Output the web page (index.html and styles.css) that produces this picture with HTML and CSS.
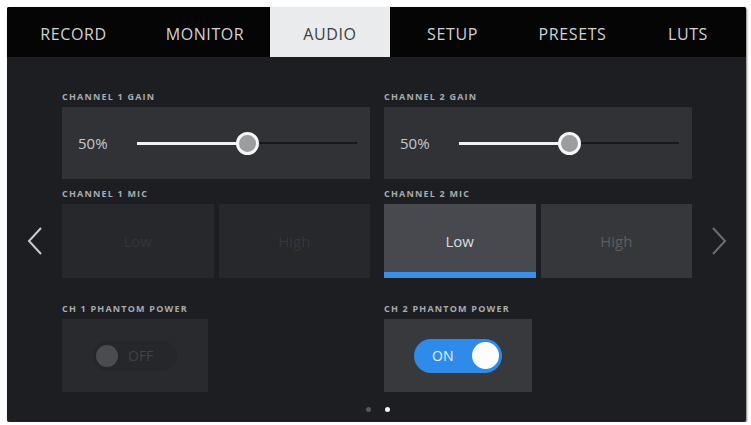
FILE: index.html
```html
<!DOCTYPE html>
<html lang="en">
<head>
    <meta charset="UTF-8">
    <title>audio-menu</title>
    <link rel="stylesheet" href="styles.css">
</head>
<body>
<div class="screen">
    <ul class="tab-bar">
        <li class="tab tab-record">RECORD</li>
        <li class="tab tab-monitor">MONITOR</li>
        <li class="tab tab-audio active-tab">AUDIO</li>
        <li class="tab tab-setup">SETUP</li>
        <li class="tab tab-presets">PRESETS</li>
        <li class="tab tab-luts">LUTS</li>
    </ul>

    <div class="menu-body">
        <!--gain-->
        <div class="menu-row">
            <div class="side"></div>
            <div class="columns">
                <div class="setting">
                    <div class="setting-label">CHANNEL 1 GAIN</div>
                    <div class="gain-box">
                        <span class="gain-value">50%</span>
                        <div class="slider">
                            <div class="slider-fill" style="width: 50%;"></div>
                            <div class="slider-thumb" style="left: 50%;"></div>
                        </div>
                    </div>
                </div>
                <div class="setting">
                    <div class="setting-label">CHANNEL 2 GAIN</div>
                    <div class="gain-box">
                        <span class="gain-value">50%</span>
                        <div class="slider">
                            <div class="slider-fill" style="width: 50%;"></div>
                            <div class="slider-thumb" style="left: 50%;"></div>
                        </div>
                    </div>
                </div>
            </div>
            <div class="side"></div>
        </div>

        <!--mic level-->
        <div class="menu-row mic-row">
            <div class="side">
                <svg class="nav-arrow" width="16" height="28" viewBox="0 0 16 28">
                    <path d="M14 1 L2 14 L14 27" fill="none" stroke="#c9cacc" stroke-width="2"/>
                </svg>
            </div>
            <div class="columns">
                <div class="setting">
                    <div class="setting-label">CHANNEL 1 MIC</div>
                    <div class="mic-buttons disabled">
                        <div class="mic-btn">Low</div>
                        <div class="mic-btn">High</div>
                    </div>
                </div>
                <div class="setting">
                    <div class="setting-label">CHANNEL 2 MIC</div>
                    <div class="mic-buttons">
                        <div class="mic-btn active-mic-btn">Low</div>
                        <div class="mic-btn">High</div>
                    </div>
                </div>
            </div>
            <div class="side">
                <svg class="nav-arrow" width="16" height="28" viewBox="0 0 16 28">
                    <path d="M2 1 L14 14 L2 27" fill="none" stroke="#6b6d70" stroke-width="2"/>
                </svg>
            </div>
        </div>

        <!--phantom power-->
        <div class="menu-row phantom-row">
            <div class="side"></div>
            <div class="columns">
                <div class="setting">
                    <div class="setting-label">CH 1 PHANTOM POWER</div>
                    <div class="phantom-box disabled">
                        <div class="toggle toggle-off">
                            <span class="toggle-knob"></span>
                            <span class="toggle-text">OFF</span>
                        </div>
                    </div>
                </div>
                <div class="setting">
                    <div class="setting-label">CH 2 PHANTOM POWER</div>
                    <div class="phantom-box">
                        <div class="toggle toggle-on">
                            <span class="toggle-text">ON</span>
                            <span class="toggle-knob"></span>
                        </div>
                    </div>
                </div>
            </div>
            <div class="side"></div>
        </div>

        <ul class="page-dots">
            <li class="page-dot"></li>
            <li class="page-dot active-page-dot"></li>
        </ul>
    </div>
</div>
</body>
</html>
```

FILE: styles.css
```css
/*reset*/
* {
    border: none;
    padding: 0;
    margin: 0;
    box-sizing: border-box;
}

li {
    list-style: none;
}

body {
    background-color: #fff;
    font-family: "Open Sans", "DejaVu Sans", sans-serif;
}

.screen {
    width: 739px;
    height: 415px;
    margin: 7px 0 0 7px;
    background-color: #1c1e22;
    border-radius: 2px;
    overflow: hidden;
    box-shadow: 1px 1px 2px rgba(0, 0, 0, .5);
}

/*tabs*/
.tab-bar {
    display: flex;
    height: 50px;
    background-color: #050505;
}

.tab {
    display: flex;
    align-items: center;
    justify-content: center;
    padding-top: 3px;
    font-size: 16px;
    letter-spacing: .6px;
    color: #d2d3d4;
}

.tab-record { width: 133px; }
.tab-monitor { width: 130px; }
.tab-audio { width: 120px; }
.tab-setup { width: 125px; }
.tab-presets { width: 115px; }
.tab-luts { width: 116px; }

.active-tab {
    background-color: #e9ebed;
    color: #3c3d40;
}

/*body*/
.menu-body {
    padding-top: 34px;
}

.menu-row {
    display: flex;
}

.side {
    width: 55px;
    display: flex;
    align-items: flex-end;
    justify-content: center;
}

.side:last-child {
    width: 53px;
}

.columns {
    display: grid;
    grid-template-columns: 308px 308px;
    column-gap: 14px;
}

.setting-label {
    height: 12px;
    line-height: 12px;
    margin-bottom: 4px;
    font-size: 9px;
    font-weight: bold;
    letter-spacing: 1.2px;
    color: #a9abae;
}

/*gain*/
.gain-box {
    height: 72px;
    display: flex;
    align-items: center;
    padding: 0 13px 0 16px;
    background-color: #303236;
}

.gain-value {
    width: 59px;
    font-size: 15px;
    color: #c6c7c9;
}

.slider {
    position: relative;
    flex: 1;
    height: 2px;
    background-color: #18191b;
}

.slider-fill {
    height: 3px;
    margin-top: -.5px;
    background-color: #f2f2f2;
}

.slider-thumb {
    position: absolute;
    top: 50%;
    width: 23px;
    height: 23px;
    margin: -11.5px 0 0 -11.5px;
    border: 3px solid #f6f6f6;
    border-radius: 50%;
    background-color: #9c9d9f;
}

/*mic*/
.mic-row {
    margin-top: 9px;
}

.mic-row .side {
    align-items: center;
    padding-top: 16px;
}

.mic-buttons {
    display: grid;
    grid-template-columns: 1fr 1fr;
    column-gap: 5px;
    height: 74px;
}

.mic-btn {
    display: flex;
    align-items: center;
    justify-content: center;
    background-color: #35373b;
    font-size: 15px;
    color: #5c5e62;
}

.active-mic-btn {
    background-color: #47494e;
    color: #dcdde0;
    border-bottom: 6px solid #3b8fe6;
    padding-top: 6px;
}

.mic-buttons.disabled .mic-btn {
    background-color: #26282c;
    color: #34363a;
}

/*phantom*/
.phantom-row {
    margin-top: 25px;
}

.phantom-box {
    width: 148px;
    height: 73px;
    display: flex;
    align-items: center;
    justify-content: center;
    background-color: #37393d;
}

.phantom-box.disabled {
    width: 146px;
    background-color: #282a2e;
}

.toggle {
    display: flex;
    align-items: center;
    border-radius: 17px;
}

.toggle-on {
    width: 88px;
    height: 34px;
    padding: 0 3px 0 18px;
    justify-content: space-between;
    background-color: #2e8bea;
}

.toggle-on .toggle-text {
    font-size: 14px;
    color: #e6efff;
}

.toggle-on .toggle-knob {
    width: 27px;
    height: 27px;
    border-radius: 50%;
    background-color: #fdfdfd;
}

.toggle-off {
    width: 84px;
    height: 30px;
    padding: 0 3px;
    background-color: #25272a;
}

.toggle-off .toggle-knob {
    width: 22px;
    height: 22px;
    border-radius: 50%;
    background-color: #4a4c50;
}

.toggle-off .toggle-text {
    margin-left: 10px;
    font-size: 14px;
    color: #414347;
}

/*pages*/
.page-dots {
    display: flex;
    justify-content: center;
    gap: 14px;
    margin-top: 15px;
    padding-left: 2px;
}

.page-dot {
    width: 5px;
    height: 5px;
    border-radius: 50%;
    background-color: #55575b;
}

.active-page-dot {
    background-color: #f2f2f2;
}
```
